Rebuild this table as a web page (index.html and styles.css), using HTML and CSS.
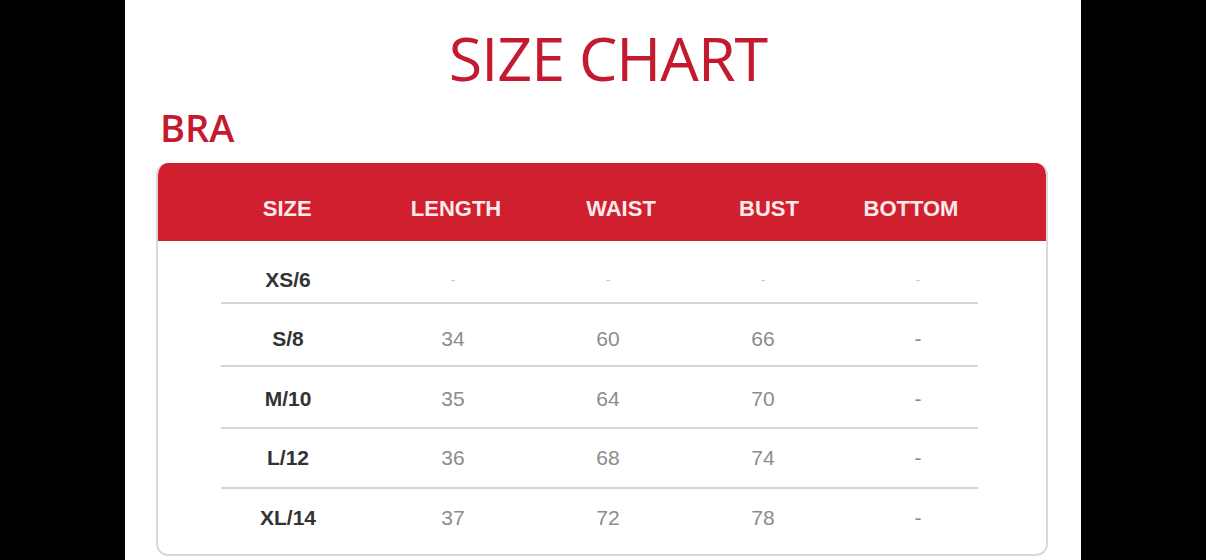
FILE: index.html
```html
<!DOCTYPE html>
<html>
<head>
<meta charset="utf-8">
<link rel="stylesheet" href="styles.css">
</head>
<body>
<div class="panel">
  <h1 class="title">SIZE CHART</h1>
  <h2 class="section">BRA</h2>
  <div class="card">
    <div class="head">
      <span>SIZE</span><span>LENGTH</span><span>WAIST</span><span>BUST</span><span>BOTTOM</span>
    </div>
    <div class="rows">
      <div class="row r1"><span class="lbl">XS/6</span><span class="dot">-</span><span class="dot">-</span><span class="dot">-</span><span class="dot">-</span></div>
      <div class="row r2"><span class="lbl">S/8</span><span>34</span><span>60</span><span>66</span><span>-</span></div>
      <div class="row r3"><span class="lbl">M/10</span><span>35</span><span>64</span><span>70</span><span>-</span></div>
      <div class="row r4"><span class="lbl">L/12</span><span>36</span><span>68</span><span>74</span><span>-</span></div>
      <div class="row r5"><span class="lbl">XL/14</span><span>37</span><span>72</span><span>78</span><span>-</span></div>
    </div>
  </div>
</div>
</body>
</html>
```

FILE: styles.css
```css
html, body {
  margin: 0;
  padding: 0;
  background: #000;
  height: 560px;
  overflow: hidden;
}
.panel {
  width: 956px;
  height: 560px;
  margin: 0 auto;
  background: #fff;
  padding-top: 27px;
  box-sizing: border-box;
}
.title {
  margin: 0;
  padding-left: 10px;
  text-align: center;
  font-family: "Open Sans", sans-serif;
  font-weight: 400;
  font-size: 61px;
  line-height: 61px;
  letter-spacing: -1px;
  color: #c41a30;
}
.section {
  margin: 20px 0 0 35px;
  font-family: "Open Sans", sans-serif;
  font-weight: 600;
  font-size: 38px;
  line-height: 38px;
  color: #c41a30;
}
.card {
  margin: 17px 33px 0 31px;
  border: 2px solid #d9d9d9;
  border-top: none;
  border-radius: 12px;
  overflow: hidden;
  height: 393px;
  box-sizing: border-box;
  font-family: "Liberation Sans", Arial, sans-serif;
}
.head {
  height: 78px;
  margin: 0 -2px;
  background: #d01f2e;
  box-sizing: border-box;
  padding: 13px 0 0 47px;
  display: grid;
  grid-template-columns: 168.5px 169px 161px 135px 149px;
  align-items: center;
  justify-items: center;
  font-weight: 700;
  font-size: 22px;
  color: #fbeaea;
}
.rows {
  margin: 0 68px 0 63px;
}
.row {
  border-bottom: 2px solid #dcd2d5;
  display: grid;
  grid-template-columns: 154.5px repeat(4, 155px);
  align-items: center;
  justify-items: center;
  font-size: 21px;
  color: #8c8c8c;
}
.r1 { padding-top: 17px; height: 44px; }
.r2 { padding-top: 9px; height: 52px; }
.r3 { padding-top: 4px; height: 56px; }
.r4 { padding-top: 0; height: 58px; }
.r5 { padding-top: 0; height: 58px; border-bottom: none; }
.row .lbl {
  padding-right: 20.5px;
  font-weight: 700;
  color: #333;
}
.row .dot {
  color: #c8c8c8;
  font-size: 14px;
}
```
